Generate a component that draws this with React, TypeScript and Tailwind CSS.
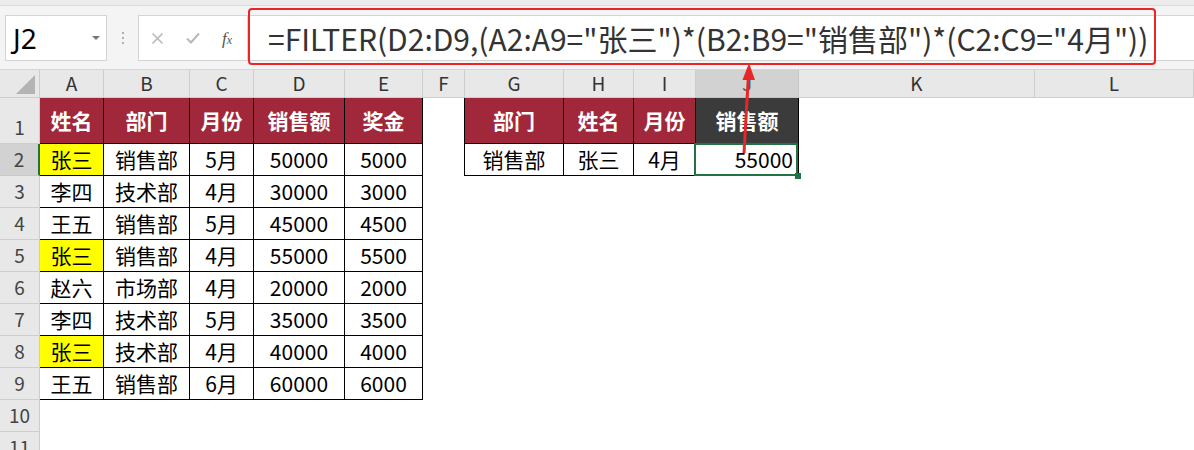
import React from 'react';

const letters = ['A', 'B', 'C', 'D', 'E', 'F', 'G', 'H', 'I', 'J', 'K', 'L'];

const rows = [
  ['张三', '销售部', '5月', '50000', '5000'],
  ['李四', '技术部', '4月', '30000', '3000'],
  ['王五', '销售部', '5月', '45000', '4500'],
  ['张三', '销售部', '4月', '55000', '5500'],
  ['赵六', '市场部', '4月', '20000', '2000'],
  ['李四', '技术部', '5月', '35000', '3500'],
  ['张三', '技术部', '4月', '40000', '4000'],
  ['王五', '销售部', '6月', '60000', '6000'],
];

const headA = ['姓名', '部门', '月份', '销售额', '奖金'];
const headG = ['部门', '姓名', '月份'];
const resultG = ['销售部', '张三', '4月'];

function FormulaBar() {
  return (
    <div className="h-[70px] bg-[#f4f4f4] border-b border-[#d6d6d6]">
      <div className="h-[6px] bg-[#ececec] border-b border-[#dcdcdc]" />
      <div className="flex items-center pl-[5px] pt-[9px]">
        <div className="w-[102px] h-[46px] bg-white border border-[#d4d4d4] flex items-center justify-between pl-[7px] pr-[6px]">
          <span className="text-[28px] text-black font-['Noto_Sans',sans-serif] leading-none">J2</span>
          <span className="w-0 h-0 border-l-[4px] border-r-[4px] border-t-[4px] border-l-transparent border-r-transparent border-t-[#777]" />
        </div>
        <div className="w-[31px] flex flex-col items-center gap-[3px]">
          <span className="w-[2px] h-[2px] bg-[#b0b0b0]" />
          <span className="w-[2px] h-[2px] bg-[#b0b0b0]" />
          <span className="w-[2px] h-[2px] bg-[#b0b0b0]" />
        </div>
        <div className="w-[110px] h-[46px] bg-white border border-[#d4d4d4] flex items-center pl-[12px] gap-[22px]">
          <svg width="13" height="13" viewBox="0 0 13 13">
            <path d="M1.5 1.5 L11.5 11.5 M11.5 1.5 L1.5 11.5" stroke="#b8b8b8" strokeWidth="1.6" />
          </svg>
          <svg width="14" height="12" viewBox="0 0 14 12">
            <path d="M1 6.5 L5 10.5 L13 1.5" stroke="#b8b8b8" strokeWidth="2" fill="none" />
          </svg>
          <span className="font-['Liberation_Serif',serif] italic text-[#555] text-[17px] leading-none">
            f<span className="text-[12px]">x</span>
          </span>
        </div>
        <div className="relative flex-1 h-[46px] bg-white border-y border-[#d4d4d4] flex items-center">
          <div className="absolute left-0 w-[908px] top-[-8px] bottom-[-5px] border-[2px] border-[#e8262a] rounded-[4px]" />
          <span className="pl-[20px] text-[30px] text-[#333] font-['Noto_Sans_CJK_SC',sans-serif] leading-none whitespace-nowrap">
            =FILTER(D2:D9,(A2:A9="张三")*(B2:B9="销售部")*(C2:C9="4月"))
          </span>
        </div>
      </div>
    </div>
  );
}

function RowHead({ n }: { n: number }) {
  return (
    <div
      className={
        n === 2
          ? 'flex items-end justify-center pb-[2px] bg-[#d2d2d2] border-b border-[#c8c8c8] border-r-2 border-r-[#217346] text-[19px] text-[#444]'
          : 'flex items-end justify-center pb-[2px] bg-[#e8e8e8] border-b border-r border-[#cdcdcd] text-[19px] text-[#444]'
      }
    >
      {n}
    </div>
  );
}

export default function App() {
  const cells: React.ReactNode[] = [];

  // column headers
  cells.push(
    <div key="corner" className="bg-[#e8e8e8] border-r border-b border-[#cdcdcd] flex items-end justify-end pr-[4px] pb-[3px]">
      <svg width="19" height="19" viewBox="0 0 19 19">
        <polygon points="19,0 19,19 0,19" fill="#b4b4b4" />
      </svg>
    </div>
  );
  letters.forEach((l) => {
    cells.push(
      <div
        key={'h' + l}
        className={
          l === 'J'
            ? 'flex items-center justify-center bg-[#d2d2d2] border-r border-b border-[#c4c4c4] text-[19px] text-[#217346]'
            : 'flex items-center justify-center bg-[#e8e8e8] border-r border-b border-[#cdcdcd] text-[19px] text-[#333]'
        }
      >
        {l}
      </div>
    );
  });

  // row 1
  cells.push(<RowHead key="r1" n={1} />);
  headA.forEach((t, i) => {
    cells.push(
      <div key={'a1' + i} className="flex items-center justify-center bg-[#a0283a] text-white font-bold text-[21px] border-r border-b border-black">
        {t}
      </div>
    );
  });
  cells.push(<div key="f1" className="border-r border-black" />);
  headG.forEach((t, i) => {
    cells.push(
      <div key={'g1' + i} className="flex items-center justify-center bg-[#a0283a] text-white font-bold text-[21px] border-r border-b border-black">
        {t}
      </div>
    );
  });
  cells.push(
    <div key="j1" className="flex items-center justify-center bg-[#3b3b3b] text-white font-bold text-[21px] border-r border-b border-black">
      销售额
    </div>
  );
  cells.push(<div key="k1" />, <div key="l1" />);

  // rows 2-11
  for (let r = 2; r <= 11; r++) {
    cells.push(<RowHead key={'r' + r} n={r} />);
    const data = rows[r - 2];
    for (let c = 0; c < 12; c++) {
      const key = `c${r}-${c}`;
      if (data && c < 5) {
        const yellow = c === 0 && data[0] === '张三';
        cells.push(
          <div
            key={key}
            className={
              yellow
                ? 'flex items-center justify-center bg-[#ffff00] text-[21px] text-black border-r border-b border-black'
                : 'flex items-center justify-center text-[21px] text-black border-r border-b border-black'
            }
          >
            {data[c]}
          </div>
        );
      } else if (r === 2 && c === 5) {
        cells.push(<div key={key} className="border-r border-black" />);
      } else if (r === 2 && c >= 6 && c <= 8) {
        cells.push(
          <div key={key} className="flex items-center justify-center text-[21px] text-black border-r border-b border-black">
            {resultG[c - 6]}
          </div>
        );
      } else if (r === 2 && c === 9) {
        cells.push(
          <div key={key} className="relative flex items-center justify-end pr-[5px] text-[21px] text-black border-r border-b border-black">
            55000
            <div className="absolute left-[-2px] top-[-1px] right-0 bottom-[-1px] border-2 border-[#217346]" />
            <div className="absolute right-[-3px] bottom-[-4px] w-[6px] h-[6px] bg-[#217346]" />
          </div>
        );
      } else {
        cells.push(<div key={key} />);
      }
    }
  }

  return (
    <div className="relative w-[1194px] h-[450px] overflow-hidden bg-white font-['Noto_Sans_CJK_SC',sans-serif]">
      <FormulaBar />
      <div className="grid grid-cols-[40px_64px_86px_64px_91px_78px_42px_99px_70px_62px_103px_236px_159px] grid-rows-[28px_46px_repeat(10,32px)]">
        {cells}
      </div>
      <svg className="absolute left-0 top-0 pointer-events-none" width="1194" height="450" viewBox="0 0 1194 450">
        <line x1="744" y1="153" x2="748.5" y2="74" stroke="#e8262a" strokeWidth="3" />
        <polygon points="749,63 742.5,80 755,80" fill="#e8262a" />
      </svg>
    </div>
  );
}
